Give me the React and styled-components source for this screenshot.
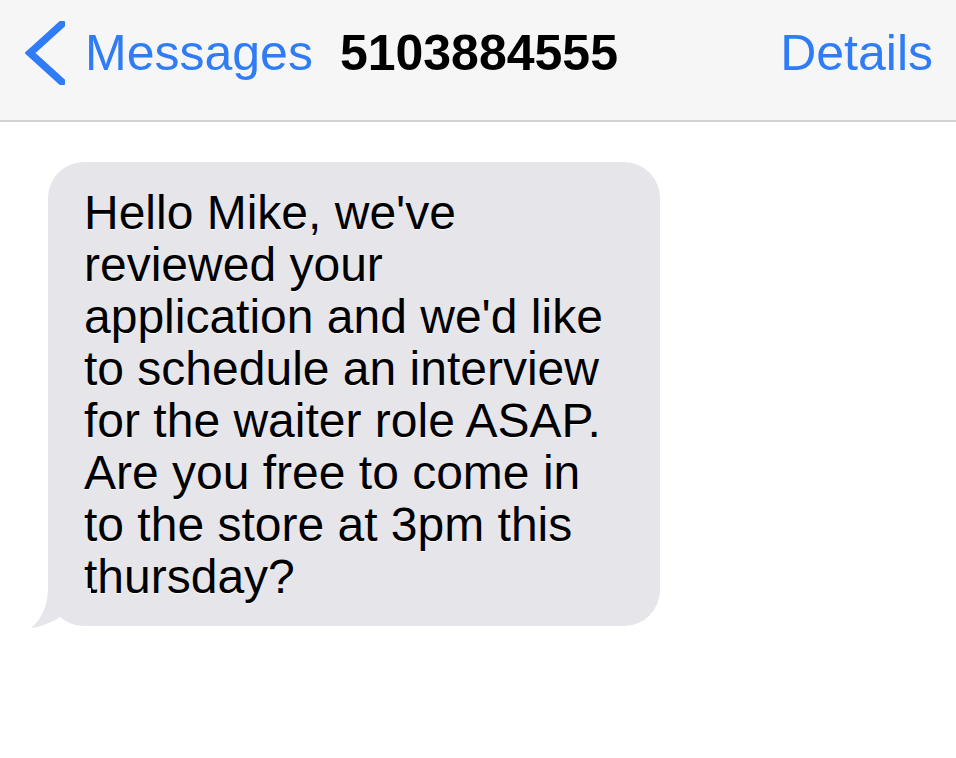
import React from 'react'
import styled, { createGlobalStyle } from 'styled-components'

const GlobalStyle = createGlobalStyle`
  html, body {
    margin: 0;
    padding: 0;
    background: #ffffff;
  }
  body {
    font-family: 'Liberation Sans', Arial, Helvetica, sans-serif;
  }
`

const Page = styled.div`
  width: 956px;
  height: 758px;
  overflow: hidden;
  background: #ffffff;
`

const NavBar = styled.header`
  display: flex;
  align-items: center;
  height: 122px;
  box-sizing: border-box;
  padding: 0 23px 14px 25px;
  background: #f6f6f6;
  border-bottom: 2px solid #d2d2d2;
`

const BackButton = styled.div`
  display: flex;
  align-items: center;
  gap: 20px;
  color: #2f7cf6;
  font-size: 50px;
  line-height: 1;
`

const Title = styled.div`
  margin-left: 27px;
  font-size: 50px;
  font-weight: 700;
  color: #000;
  line-height: 1;
`

const NavAction = styled.div`
  margin-left: auto;
  font-size: 50px;
  color: #2f7cf6;
  line-height: 1;
`

const Thread = styled.main`
  padding: 40px 0 0 48px;
`

const Bubble = styled.div`
  position: relative;
  width: 612px;
  box-sizing: border-box;
  padding: 25px 36px 23px 36px;
  background: #e5e5ea;
  border-radius: 36px;
  font-size: 48px;
  line-height: 52px;
  color: #000;
  text-shadow: 0 1px 1px rgba(255, 255, 255, 0.9);
`

const Tail = styled.svg`
  position: absolute;
  left: -17px;
  bottom: -2px;
  width: 60px;
  height: 40px;
`

const Chevron = () => (
  <svg width="40" height="64" viewBox="0 0 40 64">
    <path d="M37 3 L5 32 L37 61" fill="none" stroke="#2f7cf6" strokeWidth="7.5" strokeLinecap="round" strokeLinejoin="miter" />
  </svg>
)

export default function App() {
  return (
    <Page>
      <GlobalStyle />
      <NavBar>
        <BackButton>
          <Chevron />
          <span>Messages</span>
        </BackButton>
        <Title>5103884555</Title>
        <NavAction>Details</NavAction>
      </NavBar>
      <Thread>
        <Bubble>
          <Tail viewBox="0 0 60 40">
            <path d="M17 0 C17 18 10 32 0 40 C12 38 22 34 30 28 C36 34 44 38 60 38 L60 0 Z" fill="#e5e5ea" />
          </Tail>
          Hello Mike, we've reviewed your application and we'd like to schedule an interview for the waiter role ASAP. Are you free to come in to the store at 3pm this thursday?
        </Bubble>
      </Thread>
    </Page>
  )
}
